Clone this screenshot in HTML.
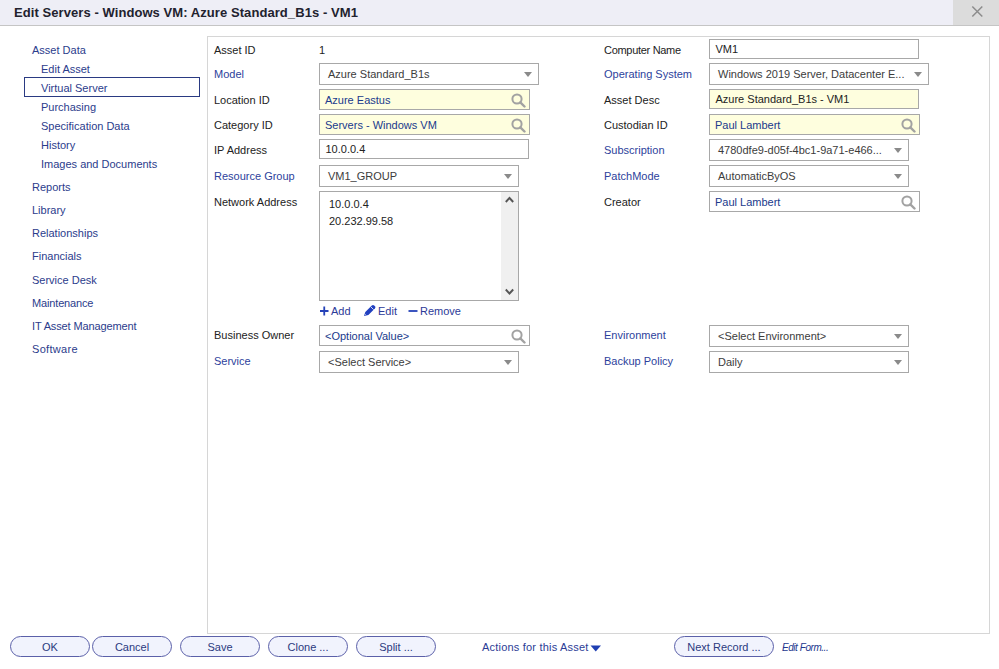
<!DOCTYPE html>
<html><head><meta charset="utf-8">
<style>
*{box-sizing:border-box;margin:0;padding:0}
html,body{width:999px;height:669px;overflow:hidden;background:#fff;font-family:"Liberation Sans",sans-serif;font-size:11px;color:#222}
.a{position:absolute;white-space:nowrap;line-height:13px}
#hdr{position:absolute;left:0;top:0;width:999px;height:26px;background:#eeeef6;border-bottom:1px solid #c5c5c5}
#close{position:absolute;left:953px;top:0;width:46px;height:25px;background:#dcdcdc}
#title{position:absolute;left:14px;top:5px;font-weight:bold;font-size:13px;letter-spacing:0.07px;line-height:16px;color:#22222e;white-space:nowrap}
.nav{color:#2b3c8c}
#sel{position:absolute;left:24px;top:77px;width:176px;height:20px;border:1px solid #2a3a82}
#panel{position:absolute;left:207px;top:36px;width:783px;height:598px;border:1px solid #d6d6d6}
.lbl{color:#222}
.blu{color:#2d3f9c}
.box{position:absolute;border:1px solid #a8a8a8;background:#fff}
.yel{background:#fefede}
.tx{position:absolute;white-space:nowrap;line-height:13px;color:#222}
.lt{color:#203a8c}
.sv{color:#3c3c3c}
.arr{position:absolute;width:0;height:0;border-left:4px solid transparent;border-right:4px solid transparent;border-top:5px solid #8a8a8a}
.mag{position:absolute}
.btn{position:absolute;top:636px;height:21px;border:1px solid #5b60a9;border-radius:11px;background:#f1f3fd;color:#2b3a80;text-align:center;line-height:21px;font-size:11px}
</style></head><body>
<div id="hdr"></div>
<div id="close"><svg width="46" height="25" style="position:absolute;left:0;top:0"><path d="M19.3 6.5 L29.3 16.5 M29.3 6.5 L19.3 16.5" stroke="#8c8c8c" stroke-width="1.5" fill="none"/></svg></div>
<div id="title">Edit Servers - Windows VM: Azure Standard_B1s - VM1</div>

<div class="a nav" style="left:32px;top:44px">Asset Data</div>
<div class="a nav" style="left:41px;top:63px">Edit Asset</div>
<div id="sel"></div>
<div class="a nav" style="left:41px;top:82px">Virtual Server</div>
<div class="a nav" style="left:41px;top:101px">Purchasing</div>
<div class="a nav" style="left:41px;top:120px">Specification Data</div>
<div class="a nav" style="left:41px;top:139px">History</div>
<div class="a nav" style="left:41px;top:158px">Images and Documents</div>
<div class="a nav" style="left:32px;top:181px">Reports</div>
<div class="a nav" style="left:32px;top:204px">Library</div>
<div class="a nav" style="left:32px;top:227px">Relationships</div>
<div class="a nav" style="left:32px;top:250px">Financials</div>
<div class="a nav" style="left:32px;top:274px">Service Desk</div>
<div class="a nav" style="left:32px;top:297px;letter-spacing:-0.15px">Maintenance</div>
<div class="a nav" style="left:32px;top:320px;letter-spacing:-0.13px">IT Asset Management</div>
<div class="a nav" style="left:32px;top:343px;letter-spacing:0.3px">Software</div>

<div id="panel"></div>

<!-- column 1 labels -->
<div class="a lbl" style="left:214px;top:44px">Asset ID</div>
<div class="a lbl" style="left:319px;top:44px">1</div>
<div class="a blu" style="left:214px;top:68px">Model</div>
<div class="a lbl" style="left:214px;top:94px">Location ID</div>
<div class="a lbl" style="left:214px;top:119px">Category ID</div>
<div class="a lbl" style="left:214px;top:144px">IP Address</div>
<div class="a blu" style="left:214px;top:170px">Resource Group</div>
<div class="a lbl" style="left:214px;top:196px">Network Address</div>
<div class="a lbl" style="left:214px;top:329px">Business Owner</div>
<div class="a blu" style="left:214px;top:355px">Service</div>

<!-- column 1 boxes -->
<div class="box" style="left:319px;top:63px;width:220px;height:22px"><div class="tx sv" style="left:8px;top:4px">Azure Standard_B1s</div><div class="arr" style="left:204px;top:8px"></div></div>
<div class="box yel" style="left:319px;top:89px;width:211px;height:21px"><div class="tx lt" style="left:5px;top:4px">Azure Eastus</div><svg class="mag" style="left:191px;top:3px" width="15" height="15"><circle cx="6" cy="6" r="4.6" stroke="#a2a2a2" stroke-width="2" fill="none"/><path d="M9.3 9.3 L13.5 13.5" stroke="#a2a2a2" stroke-width="2.4" stroke-linecap="round"/></svg></div>
<div class="box yel" style="left:319px;top:114px;width:211px;height:21px"><div class="tx lt" style="left:5px;top:4px">Servers - Windows VM</div><svg class="mag" style="left:191px;top:3px" width="15" height="15"><circle cx="6" cy="6" r="4.6" stroke="#a2a2a2" stroke-width="2" fill="none"/><path d="M9.3 9.3 L13.5 13.5" stroke="#a2a2a2" stroke-width="2.4" stroke-linecap="round"/></svg></div>
<div class="box" style="left:319px;top:139px;width:210px;height:20px"><div class="tx" style="left:5.5px;top:3px">10.0.0.4</div></div>
<div class="box" style="left:319px;top:165px;width:200px;height:22px"><div class="tx sv" style="left:8px;top:4px">VM1_GROUP</div><div class="arr" style="left:184px;top:8px"></div></div>
<div class="box" style="left:319px;top:191px;width:200px;height:110px">
  <div class="tx" style="left:9px;top:6px">10.0.0.4</div>
  <div class="tx" style="left:9px;top:23px">20.232.99.58</div>
  <div style="position:absolute;left:181px;top:0;width:17px;height:108px;background:#f0f0f0"></div>
  <svg style="position:absolute;left:181px;top:0" width="17" height="108"><path d="M4.8 10 L8.5 6 L12.2 10" stroke="#555" stroke-width="1.9" fill="none"/><path d="M4.8 97.5 L8.5 101.5 L12.2 97.5" stroke="#555" stroke-width="1.9" fill="none"/></svg>
</div>
<svg style="position:absolute;left:319px;top:305px" width="12" height="12"><path d="M1 6 H9.5 M5.25 1.5 V10.5" stroke="#2542b8" stroke-width="1.8" fill="none"/></svg>
<div class="a" style="left:331px;top:305px;color:#2c3a98">Add</div>
<svg style="position:absolute;left:363px;top:304px" width="14" height="13"><path d="M1 12 L2.3 8 L8.8 1.5 Q10 0.4 11.2 1.5 L11.9 2.2 Q13 3.4 11.9 4.6 L5.4 11 Z" fill="#2140c0"/><path d="M8 3 L10.6 5.6" stroke="#fff" stroke-width="0.8"/><path d="M2.2 10.8 L2.9 9.9" stroke="#fff" stroke-width="0.7"/></svg>
<div class="a" style="left:378px;top:305px;color:#2c3a98">Edit</div>
<svg style="position:absolute;left:408px;top:305px" width="11" height="12"><path d="M0.5 6 H9.5" stroke="#2542b8" stroke-width="1.8"/></svg>
<div class="a" style="left:420px;top:305px;color:#2c3a98">Remove</div>
<div class="box" style="left:319px;top:325px;width:211px;height:21px"><div class="tx lt" style="left:5px;top:4px">&lt;Optional Value&gt;</div><svg class="mag" style="left:191px;top:3px" width="15" height="15"><circle cx="6" cy="6" r="4.6" stroke="#a2a2a2" stroke-width="2" fill="none"/><path d="M9.3 9.3 L13.5 13.5" stroke="#a2a2a2" stroke-width="2.4" stroke-linecap="round"/></svg></div>
<div class="box" style="left:319px;top:351px;width:200px;height:22px"><div class="tx sv" style="left:8px;top:4px">&lt;Select Service&gt;</div><div class="arr" style="left:184px;top:8px"></div></div>

<!-- column 2 labels -->
<div class="a lbl" style="left:604px;top:44px;letter-spacing:-0.3px">Computer Name</div>
<div class="a blu" style="left:604px;top:68px">Operating System</div>
<div class="a lbl" style="left:604px;top:94px">Asset Desc</div>
<div class="a lbl" style="left:604px;top:119px">Custodian ID</div>
<div class="a blu" style="left:604px;top:144px">Subscription</div>
<div class="a blu" style="left:604px;top:170px">PatchMode</div>
<div class="a lbl" style="left:604px;top:196px">Creator</div>
<div class="a blu" style="left:604px;top:329px">Environment</div>
<div class="a blu" style="left:604px;top:355px">Backup Policy</div>

<!-- column 2 boxes -->
<div class="box" style="left:709px;top:39px;width:210px;height:20px"><div class="tx" style="left:5.5px;top:3px">VM1</div></div>
<div class="box" style="left:709px;top:63px;width:220px;height:22px"><div class="tx sv" style="left:8px;top:4px">Windows 2019 Server, Datacenter E...</div><div class="arr" style="left:204px;top:8px"></div></div>
<div class="box yel" style="left:709px;top:89px;width:210px;height:20px"><div class="tx" style="left:5.5px;top:3px">Azure Standard_B1s - VM1</div></div>
<div class="box yel" style="left:709px;top:114px;width:211px;height:21px"><div class="tx lt" style="left:5px;top:4px">Paul Lambert</div><svg class="mag" style="left:191px;top:3px" width="15" height="15"><circle cx="6" cy="6" r="4.6" stroke="#a2a2a2" stroke-width="2" fill="none"/><path d="M9.3 9.3 L13.5 13.5" stroke="#a2a2a2" stroke-width="2.4" stroke-linecap="round"/></svg></div>
<div class="box" style="left:709px;top:139px;width:200px;height:22px"><div class="tx sv" style="left:8px;top:4px">4780dfe9-d05f-4bc1-9a71-e466...</div><div class="arr" style="left:184px;top:8px"></div></div>
<div class="box" style="left:709px;top:165px;width:200px;height:22px"><div class="tx sv" style="left:8px;top:4px">AutomaticByOS</div><div class="arr" style="left:184px;top:8px"></div></div>
<div class="box" style="left:709px;top:191px;width:211px;height:21px"><div class="tx lt" style="left:5px;top:4px">Paul Lambert</div><svg class="mag" style="left:191px;top:3px" width="15" height="15"><circle cx="6" cy="6" r="4.6" stroke="#a2a2a2" stroke-width="2" fill="none"/><path d="M9.3 9.3 L13.5 13.5" stroke="#a2a2a2" stroke-width="2.4" stroke-linecap="round"/></svg></div>
<div class="box" style="left:709px;top:325px;width:200px;height:22px"><div class="tx sv" style="left:8px;top:4px">&lt;Select Environment&gt;</div><div class="arr" style="left:184px;top:8px"></div></div>
<div class="box" style="left:709px;top:351px;width:200px;height:22px"><div class="tx sv" style="left:8px;top:4px">Daily</div><div class="arr" style="left:184px;top:8px"></div></div>

<!-- bottom buttons -->
<div class="btn" style="left:10px;width:80px">OK</div>
<div class="btn" style="left:92px;width:80px">Cancel</div>
<div class="btn" style="left:180px;width:80px">Save</div>
<div class="btn" style="left:268px;width:80px">Clone ...</div>
<div class="btn" style="left:356px;width:80px">Split ...</div>
<div class="a" style="left:482px;top:641px;color:#2b3c96;letter-spacing:0.2px">Actions for this Asset</div>
<svg style="position:absolute;left:590px;top:645px" width="12" height="8"><path d="M0.5 0.5 H11 L5.75 6.5 Z" fill="#1f3fb2"/></svg>
<div class="btn" style="left:674px;width:100px">Next Record ...</div>
<div class="a" style="left:782px;top:641px;font-size:10px;letter-spacing:-0.45px;font-style:italic;color:#23378e">Edit Form...</div>
</body></html>
